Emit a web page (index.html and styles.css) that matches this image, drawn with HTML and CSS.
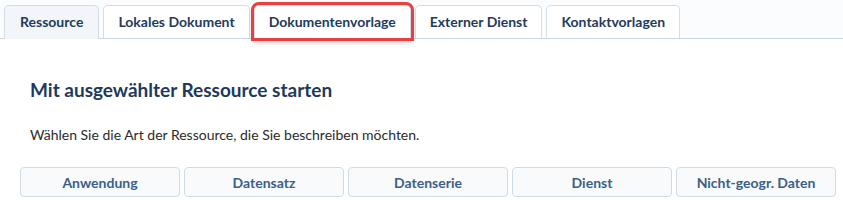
FILE: index.html
```html
<!DOCTYPE html>
<html lang="de">
<head>
    <meta charset="UTF-8">
    <title>Ressource</title>
    <link rel="stylesheet" href="styles.css">
</head>
<body>
    <div class="tabs">
        <div class="tab active">Ressource</div>
        <div class="tab">Lokales Dokument</div>
        <div class="tab marked">Dokumentenvorlage</div>
        <div class="tab">Externer Dienst</div>
        <div class="tab">Kontaktvorlagen</div>
    </div>
    <div class="content">
        <h2 class="title">Mit ausgewählter Ressource starten</h2>
        <p class="hint">Wählen Sie die Art der Ressource, die Sie beschreiben möchten.</p>
        <div class="types">
            <button class="type">Anwendung</button>
            <button class="type">Datensatz</button>
            <button class="type">Datenserie</button>
            <button class="type">Dienst</button>
            <button class="type">Nicht-geogr. Daten</button>
        </div>
    </div>
</body>
</html>
```
FILE: styles.css
```css
body {
    margin: 0;
    font-family: Lato, "Open Sans", sans-serif;
    background: #fff;
    color: #333;
}

.tabs {
    display: flex;
    gap: 4px;
    padding: 5px 0 0 4px;
    border-bottom: 1px solid #cbd6e2;
    background: #fbfcfd;
}

.tab {
    height: 32px;
    line-height: 32px;
    padding: 0 14px;
    border: 1px solid #d3dde8;
    border-bottom: none;
    border-radius: 5px 5px 0 0;
    background: #fff;
    font-size: 14px;
    font-weight: bold;
    color: #1f3b5c;
}

.tab.active {
    background: #f2f6fa;
    margin-bottom: -1px;
    height: 33px;
    padding: 0 15px;
}

.tab.marked {
    outline: 3px solid #e8403f;
    outline-offset: 0;
    box-shadow: 0 3px 6px rgba(0, 0, 0, 0.35);
}

.content {
    padding: 0 7px 0 20px;
}

.title {
    margin: 39px 0 0 10px;
    font-size: 19px;
    font-weight: bold;
    color: #1d3a5c;
}

.hint {
    margin: 25px 0 0 10px;
    font-size: 14px;
    color: #2b2b2b;
}

.types {
    display: grid;
    grid-template-columns: repeat(5, 1fr);
    gap: 4px;
    margin-top: 24px;
}

.type {
    height: 30px;
    font-family: inherit;
    font-size: 14px;
    font-weight: bold;
    color: #3b6088;
    background: #f8fafc;
    border: 1px solid #cfdbe7;
    border-radius: 4px;
}
```
